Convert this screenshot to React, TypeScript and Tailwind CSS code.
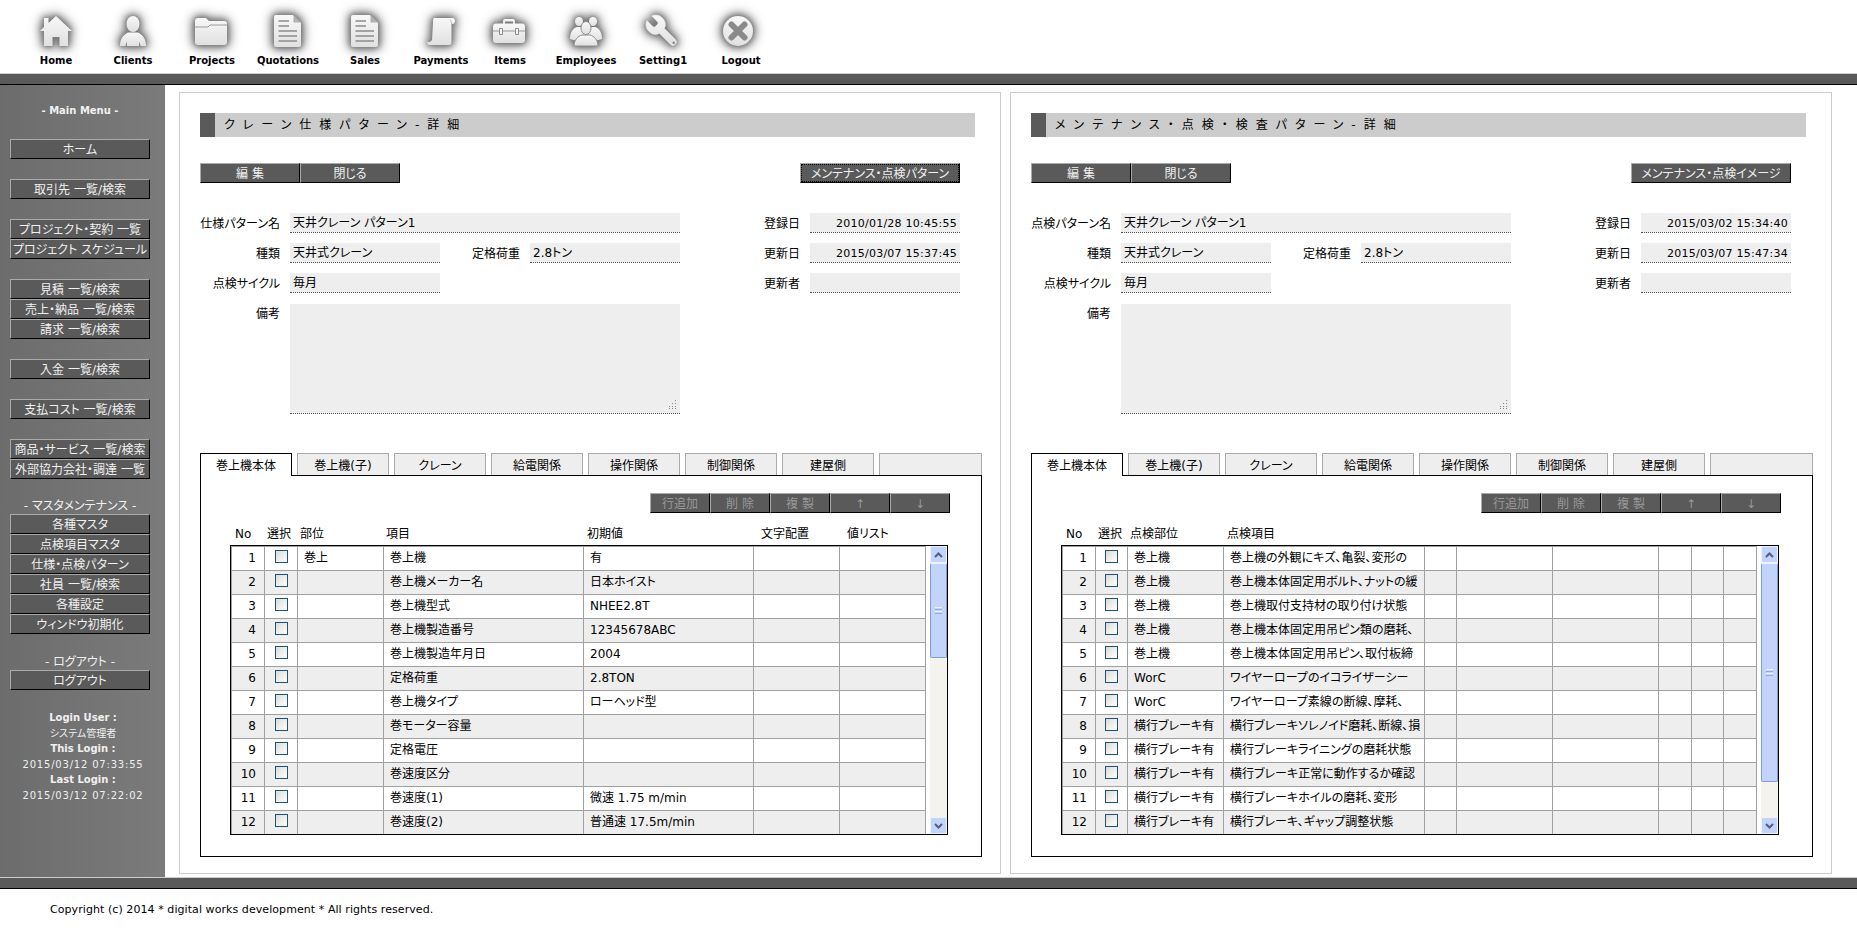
import React from 'react'

const navItems = [
  { label: 'Home', width: 'w-[76px]', icon: 'home', shift: '' },
  { label: 'Clients', width: 'w-[78px]', icon: 'client', shift: '' },
  { label: 'Projects', width: 'w-[80px]', icon: 'folder', shift: 'mr-[3px]' },
  { label: 'Quotations', width: 'w-[72px]', icon: 'doc', shift: 'mr-[2px]' },
  { label: 'Sales', width: 'w-[82px]', icon: 'doc', shift: 'mr-[1px]' },
  { label: 'Payments', width: 'w-[70px]', icon: 'scroll', shift: 'mr-[1px]' },
  { label: 'Items', width: 'w-[68px]', icon: 'toolbox', shift: 'mr-[3px]' },
  { label: 'Employees', width: 'w-[84px]', icon: 'people', shift: '' },
  { label: 'Setting1', width: 'w-[70px]', icon: 'wrench', shift: 'mr-[3px]' },
  { label: 'Logout', width: 'w-[86px]', icon: 'logout', shift: 'mr-[7px]' },
]

function NavIcon({ name, id }: { name: string; id: string }) {
  const fill = `url(#${id})`
  const defs = (
    <defs>
      <linearGradient id={id} x1="0" y1="0" x2="0" y2="1">
        <stop offset="0" stopColor="#f8f8f8" />
        <stop offset="1" stopColor="#e0e0e0" />
      </linearGradient>
    </defs>
  )
  const glow = '[filter:drop-shadow(0_0_2px_#777)_drop-shadow(0_0_4px_#777)_drop-shadow(0_0_5px_#999)]'
  if (name === 'home') {
    return (
      <svg width="32" height="30" viewBox="0 0 32 30" className={glow}>
        {defs}
        <path d="M16 0 32 15H28V30H19.5V21H12.5V30H4V15H0L4 11V2H8.5V7Z" fill={fill} />
      </svg>
    )
  }
  if (name === 'client') {
    return (
      <svg width="26" height="30" viewBox="0 0 26 30" className={glow}>
        {defs}
        <ellipse cx="13" cy="8" rx="6.5" ry="8" fill={fill} />
        <path d="M0 30C0 23 3 19 8 16.5L18 16.5C23 19 26 23 26 30H20.5L19.5 25.5 19 30H7L6.5 25.5 5.5 30Z" fill={fill} />
      </svg>
    )
  }
  if (name === 'folder') {
    return (
      <svg width="32" height="27" viewBox="0 0 32 27" className={glow}>
        {defs}
        <path d="M0 3Q0 0 3 0H11L14 3H29Q32 3 32 6V24Q32 27 29 27H3Q0 27 0 24Z" fill={fill} />
        <path d="M0 9H13L15 7H32" stroke="#9a9a9a" strokeWidth="1" fill="none" />
      </svg>
    )
  }
  if (name === 'doc') {
    return (
      <svg width="27" height="32" viewBox="0 0 27 32" className={glow}>
        {defs}
        <path d="M0 2Q0 0 2 0H19L27 8V30Q27 32 25 32H2Q0 32 0 30Z" fill={fill} />
        <path d="M19.5 0V7.5H27Z" fill="#b0b0b0" />
        <path d="M4.5 6H15M4.5 11H15M4.5 16H23M4.5 21H23M4.5 26H23" stroke="#8c8c8c" strokeWidth="1.7" />
      </svg>
    )
  }
  if (name === 'scroll') {
    return (
      <svg width="28" height="27" viewBox="0 0 28 27" className={glow}>
        {defs}
        <path d="M7 0H26Q28 0 28 2.5Q28 6 25 6H24.5V24Q24.5 27 22 27H3Q0 27 0 24Q3 25 5 22L6 5Q6 0 7 0Z" fill={fill} />
        <path d="M23 1.5Q24.5 3 24.5 6" stroke="#aaaaaa" strokeWidth="0.8" fill="none" />
      </svg>
    )
  }
  if (name === 'toolbox') {
    return (
      <svg width="32" height="24" viewBox="0 0 32 24" className={glow}>
        {defs}
        <path d="M10 6V2Q10 0 12 0H20Q22 0 22 2V6H20V2.5H12V6Z" fill={fill} />
        <rect x="0" y="4.5" width="32" height="19.5" rx="3" fill={fill} />
        <path d="M0 12H32" stroke="#999999" strokeWidth="1" />
        <path d="M6.5 9.5H9.5V15.5H6.5ZM22.5 9.5H25.5V15.5H22.5Z" fill="#f4f4f4" stroke="#8c8c8c" strokeWidth="1" />
      </svg>
    )
  }
  if (name === 'people') {
    return (
      <svg width="32" height="29" viewBox="0 0 32 29" className={glow}>
        {defs}
        <ellipse cx="9" cy="4.5" rx="4" ry="4.5" fill={fill} />
        <ellipse cx="23" cy="4.5" rx="4" ry="4.5" fill={fill} />
        <path d="M0 22C0 15 3 11 7 10H25C29 11 32 15 32 22L25 24H7Z" fill={fill} />
        <ellipse cx="16" cy="11" rx="5" ry="6.5" fill={fill} stroke="#8c8c8c" strokeWidth="1" />
        <path d="M4 29C4 23 8 19 12 18H20C24 19 28 23 28 29Z" fill={fill} stroke="#8c8c8c" strokeWidth="1" />
      </svg>
    )
  }
  if (name === 'wrench') {
    return (
      <svg width="38" height="38" viewBox="0 0 24 24" className={glow}>
        {defs}
        <g transform="translate(24 0) scale(-1 1)">
          <path
            d="M14.7 6.3a1 1 0 0 0 0 1.4l1.6 1.6a1 1 0 0 0 1.4 0l3.77-3.77a6 6 0 0 1-7.94 7.94l-6.91 6.91a2.12 2.12 0 0 1-3-3l6.91-6.91a6 6 0 0 1 7.94-7.94l-3.76 3.76z"
            fill={fill}
            stroke="#eeeeee"
            strokeWidth="0.5"
          />
          <circle cx="4.6" cy="19.4" r="0.8" fill="#888" />
        </g>
      </svg>
    )
  }
  return (
    <svg width="30" height="30" viewBox="0 0 30 30" className={glow}>
      {defs}
      <circle cx="15" cy="15" r="15" fill={fill} />
      <path d="M8.5 8.5 21.5 21.5M21.5 8.5 8.5 21.5" stroke="#8a8a8a" strokeWidth="6" strokeLinecap="round" />
    </svg>
  )
}

function Bar() {
  return <div className="h-[12px] shrink-0 border-t border-b border-t-[#cccccc] border-b-black bg-[#5a5a5a]" />
}

function Btn({ text, width, disabled, focused }: { text: string; width: string; disabled?: boolean; focused?: boolean }) {
  return (
    <button
      className={`${width} h-5 shrink-0 overflow-hidden whitespace-nowrap border border-t-[#aaaaaa] border-l-[#aaaaaa] border-r-black border-b-black bg-[#5a5a5a] pt-[2px] text-center text-[12px] leading-[16px] ${
        disabled ? 'text-[#999999]' : 'text-[#f0f0f0]'
      } ${focused ? 'outline-1 -outline-offset-2 outline-dotted outline-black' : ''}`}
    >
      {text}
    </button>
  )
}

function SideBtn({ text }: { text: string }) {
  return <Btn text={text} width="w-[140px]" />
}

function Sidebar() {
  return (
    <aside className="flex w-[165px] shrink-0 flex-col bg-linear-to-r from-[#6c6c6c] to-[#7b7b7b] pl-[10px] text-[#f0f0f0]">
      <div className="mt-[18px] h-4 w-[140px] text-center text-[10px] font-bold leading-4">- Main Menu -</div>
      <div className="mt-[20px] flex flex-col">
        <SideBtn text="ホーム" />
      </div>
      <div className="mt-[20px] flex flex-col">
        <SideBtn text="取引先 一覧/検索" />
      </div>
      <div className="mt-[20px] flex flex-col">
        <SideBtn text="プロジェクト・契約 一覧" />
        <SideBtn text="プロジェクト スケジュール" />
      </div>
      <div className="mt-[20px] flex flex-col">
        <SideBtn text="見積 一覧/検索" />
        <SideBtn text="売上・納品 一覧/検索" />
        <SideBtn text="請求 一覧/検索" />
      </div>
      <div className="mt-[20px] flex flex-col">
        <SideBtn text="入金 一覧/検索" />
      </div>
      <div className="mt-[20px] flex flex-col">
        <SideBtn text="支払コスト 一覧/検索" />
      </div>
      <div className="mt-[20px] flex flex-col">
        <SideBtn text="商品・サービス 一覧/検索" />
        <SideBtn text="外部協力会社・調達 一覧" />
      </div>
      <div className="mt-[20px] h-[15px] w-[140px] text-center text-[12px] leading-[15px]">- マスタメンテナンス -</div>
      <div className="flex flex-col">
        <SideBtn text="各種マスタ" />
        <SideBtn text="点検項目マスタ" />
        <SideBtn text="仕様・点検パターン" />
        <SideBtn text="社員 一覧/検索" />
        <SideBtn text="各種設定" />
        <SideBtn text="ウィンドウ初期化" />
      </div>
      <div className="mt-[21px] h-[15px] w-[140px] text-center text-[12px] leading-[15px]">- ログアウト -</div>
      <SideBtn text="ログアウト" />
      <div className="mt-[20px] w-[146px] text-center text-[10px] leading-[15.5px]">
        <div className="font-bold">Login User :</div>
        <div>システム管理者</div>
        <div className="font-bold">This Login :</div>
        <div className="tracking-[0.8px]">2015/03/12 07:33:55</div>
        <div className="font-bold">Last Login :</div>
        <div className="tracking-[0.8px]">2015/03/12 07:22:02</div>
      </div>
    </aside>
  )
}

function Field({ text, width, right }: { text?: string; width: string; right?: boolean }) {
  return (
    <div
      className={`${width} h-5 shrink-0 overflow-hidden whitespace-nowrap border-b border-dotted border-[#555555] bg-[#eeeeee] px-[3px] pt-px ${
        right ? 'text-right text-[11px] leading-[19px] tracking-[0.25px]' : 'text-[12px] leading-[19px]'
      }`}
    >
      {text}
    </div>
  )
}

function Label({ text, width }: { text: string; width: string }) {
  return <div className={`${width} mr-[10px] h-5 shrink-0 whitespace-nowrap pt-px text-right text-[12px] leading-5`}>{text}</div>
}

function ScrollBar({ thumb }: { thumb: string }) {
  return (
    <div className="ml-[4px] flex h-[288px] w-[17px] flex-col bg-[#f4f3ee]">
      <div className="flex h-[17px] items-center justify-center rounded-[2px] border border-[#eef2fc] bg-[#c3d4fa]">
        <svg width="9" height="6" viewBox="0 0 9 6">
          <path d="M1 5 4.5 1.5 8 5" fill="none" stroke="#4d6185" strokeWidth="2" />
        </svg>
      </div>
      <div className={`${thumb} flex shrink-0 flex-col items-center justify-center gap-[1px] rounded-[2px] border border-[#7f9ddb] border-t-[#eef2fc] bg-[#c3d4fa]`}>
        <div className="h-px w-[7px] bg-[#eef2fc]" />
        <div className="h-px w-[7px] bg-[#8faae6]" />
        <div className="h-px w-[7px] bg-[#eef2fc]" />
        <div className="h-px w-[7px] bg-[#8faae6]" />
      </div>
      <div className="flex-1" />
      <div className="flex h-[17px] items-center justify-center rounded-[2px] border border-[#eef2fc] bg-[#c3d4fa]">
        <svg width="9" height="6" viewBox="0 0 9 6">
          <path d="M1 1 4.5 4.5 8 1" fill="none" stroke="#4d6185" strokeWidth="2" />
        </svg>
      </div>
    </div>
  )
}

const tabs = ['巻上機本体', '巻上機(子)', 'クレーン', '給電関係', '操作関係', '制御関係', '建屋側']

interface PanelProps {
  title: string
  sideBtn: string
  sideFocused?: boolean
  nameLabel: string
  created: string
  updated: string
  heads: { text: string; cls: string }[]
  cols: string[]
  rows: string[][]
  thumb: string
}

function Panel(p: PanelProps) {
  return (
    <section className="h-[782px] w-[822px] shrink-0 border border-[#cccccc] bg-white pl-[20px] pt-[20px] text-black">
      <div className="flex h-6 w-[775px] bg-[#cccccc]">
        <div className="w-[15px] bg-[#5a5a5a]" />
        <div className="pl-[9px] pt-[1px] text-[12px] leading-[23px] tracking-[8px]">{p.title}</div>
      </div>

      <div className="mt-[26px] flex w-[760px] justify-between">
        <div className="flex">
          <Btn text="編 集" width="w-[100px]" />
          <Btn text="閉じる" width="w-[100px]" />
        </div>
        <Btn text={p.sideBtn} width="w-[160px]" focused={p.sideFocused} />
      </div>

      <div className="mt-[30px] flex h-[201px]">
        <div className="flex w-[480px] flex-col gap-[10px]">
          <div className="flex">
            <Label text={p.nameLabel} width="w-[80px]" />
            <Field text="天井クレーン パターン1" width="w-[390px]" />
          </div>
          <div className="flex">
            <Label text="種類" width="w-[80px]" />
            <Field text="天井式クレーン" width="w-[150px]" />
            <Label text="定格荷重" width="w-[80px]" />
            <Field text="2.8トン" width="w-[150px]" />
          </div>
          <div className="flex">
            <Label text="点検サイクル" width="w-[80px]" />
            <Field text="毎月" width="w-[150px]" />
          </div>
          <div className="flex">
            <Label text="備考" width="w-[80px]" />
            <div className="relative mt-px h-[110px] w-[390px] border-b border-dotted border-[#555555] bg-[#eeeeee]">
              <svg width="11" height="11" viewBox="0 0 11 11" className="absolute bottom-[3px] right-[3px]">
                <path d="M9 1h1v1H9zM6 4h1v1H6zM9 4h1v1H9zM3 7h1v1H3zM6 7h1v1H6zM9 7h1v1H9zM3 9h1v1H3zM6 9h1v1H6zM9 9h1v1H9z" fill="#888888" />
              </svg>
            </div>
          </div>
        </div>
        <div className="flex flex-col gap-[10px]">
          <div className="flex">
            <Label text="登録日" width="w-[120px]" />
            <Field text={p.created} width="w-[150px]" right />
          </div>
          <div className="flex">
            <Label text="更新日" width="w-[120px]" />
            <Field text={p.updated} width="w-[150px]" right />
          </div>
          <div className="flex">
            <Label text="更新者" width="w-[120px]" />
            <Field width="w-[150px]" />
          </div>
        </div>
      </div>

      <div className="relative z-10 mt-[39px] flex h-[22px] w-[782px] gap-[5px] text-[12px]">
        {tabs.map((t, i) => (
          <div
            key={t}
            className={
              i === 0
                ? 'h-[23px] w-[92px] border border-b-0 border-black bg-white pt-[2px] text-center leading-[20px]'
                : 'h-[22px] w-[92px] border border-b-0 border-[#aaaaaa] bg-[#eeeeee] pt-[2px] text-center leading-[20px]'
            }
          >
            {t}
          </div>
        ))}
        <div className="h-[22px] flex-1 border border-b-0 border-[#aaaaaa] bg-[#eeeeee]" />
      </div>

      <div className="h-[382px] w-[782px] border border-black pl-[29px] pt-[17px]">
        <div className="flex w-[720px] justify-end">
          {['行追加', '削 除', '複 製', '↑', '↓'].map(t => (
            <Btn key={t} text={t} width="w-[60px]" disabled />
          ))}
        </div>
        <div className="mt-[11px] flex h-[21px] text-[12px] leading-5">
          {p.heads.map(h => (
            <div key={h.text} className={`${h.cls} shrink-0 whitespace-nowrap`}>
              {h.text}
            </div>
          ))}
        </div>
        <div className="flex h-[290px] w-[718px] border border-black">
          <div className="w-[695px] shrink-0 border-l border-t border-[#a0a0a0]">
            {p.rows.map((row, r) => (
              <div
                key={r}
                className={`flex ${r === 11 ? 'h-[23px]' : 'h-6 border-b border-[#a0a0a0]'} ${r % 2 === 1 ? 'bg-[#eeeeee]' : 'bg-white'}`}
              >
                {p.cols.map((w, c) => (
                  <div
                    key={c}
                    className={`${w} shrink-0 overflow-hidden whitespace-nowrap border-r border-[#a0a0a0] text-[12px] leading-[23px]`}
                  >
                    {c === 0 ? (
                      <div className="pr-[8px] text-right">{r + 1}</div>
                    ) : c === 1 ? (
                      <div className="flex justify-center pt-[3px]">
                        <div className="h-[13px] w-[13px] border border-[#1c5180] bg-linear-to-br from-[#dcdcd5] to-white" />
                      </div>
                    ) : (
                      <div className="overflow-hidden pl-[6px] pr-[6px]">{row[c - 2]}</div>
                    )}
                  </div>
                ))}
              </div>
            ))}
          </div>
          <ScrollBar thumb={p.thumb} />
        </div>
      </div>
    </section>
  )
}

const leftRows: string[][] = [
  ['巻上', '巻上機', '有'],
  ['', '巻上機メーカー名', '日本ホイスト'],
  ['', '巻上機型式', 'NHEE2.8T'],
  ['', '巻上機製造番号', '12345678ABC'],
  ['', '巻上機製造年月日', '2004'],
  ['', '定格荷重', '2.8TON'],
  ['', '巻上機タイプ', 'ローヘッド型'],
  ['', '巻モーター容量', ''],
  ['', '定格電圧', ''],
  ['', '巻速度区分', ''],
  ['', '巻速度(1)', '微速 1.75 m/min'],
  ['', '巻速度(2)', '普通速 17.5m/min'],
]

const brake = '横行ブレーキ有'
const rightRows: string[][] = [
  ['巻上機', '巻上機の外観にキズ、亀裂、変形の'],
  ['巻上機', '巻上機本体固定用ボルト、ナットの緩'],
  ['巻上機', '巻上機取付支持材の取り付け状態'],
  ['巻上機', '巻上機本体固定用吊ピン類の磨耗、'],
  ['巻上機', '巻上機本体固定用吊ピン、取付板締'],
  ['WorC', 'ワイヤーロープのイコライザーシー'],
  ['WorC', 'ワイヤーロープ素線の断線、摩耗、'],
  [brake, '横行ブレーキソレノイド磨耗、断線、損'],
  [brake, '横行ブレーキライニングの磨耗状態'],
  [brake, '横行ブレーキ正常に動作するか確認'],
  [brake, '横行ブレーキホイルの磨耗、変形'],
  [brake, '横行ブレーキ、ギャップ調整状態'],
]

export default function App() {
  return (
    <div className="flex h-[938px] w-[1857px] flex-col overflow-hidden bg-white [font-family:'DejaVu_Sans','Noto_Sans_CJK_JP',sans-serif] [font-feature-settings:'palt']">
      <header className="flex h-[73px] shrink-0 pl-[18px] pt-[13px]">
        {navItems.map((n, i) => (
          <div key={n.label} className={`${n.width} flex shrink-0 flex-col items-center`}>
            <div className={`${n.shift} flex h-[36px] items-center justify-center`}>
              <NavIcon name={n.icon} id={`nav-grad-${i}`} />
            </div>
            <div className="mt-[6px] text-[10px] font-bold leading-3 text-black">{n.label}</div>
          </div>
        ))}
      </header>
      <Bar />
      <div className="flex h-[792px] shrink-0">
        <Sidebar />
        <div className="ml-[14px] flex gap-[9px] pt-[7px]">
          <Panel
            title="クレーン仕様パターン-詳細"
            sideBtn="メンテナンス・点検パターン"
            sideFocused
            nameLabel="仕様パターン名"
            created="2010/01/28 10:45:55"
            updated="2015/03/07 15:37:45"
            heads={[
              { text: 'No', cls: 'w-[35px] pl-[5px]' },
              { text: '選択', cls: 'w-[33px] pl-[2px]' },
              { text: '部位', cls: 'w-[86px] pl-[2px]' },
              { text: '項目', cls: 'w-[200px] pl-[2px]' },
              { text: '初期値', cls: 'w-[170px] pl-[3px]' },
              { text: '文字配置', cls: 'w-[86px] pl-[7px]' },
              { text: '値リスト', cls: 'w-[86px] pl-[7px]' },
            ]}
            cols={['w-[33px]', 'w-[33px]', 'w-[86px]', 'w-[200px]', 'w-[170px]', 'w-[86px]', 'w-[86px]']}
            rows={leftRows}
            thumb="h-[95px]"
          />
          <Panel
            title="メンテナンス・点検・検査パターン-詳細"
            sideBtn="メンテナンス・点検イメージ"
            nameLabel="点検パターン名"
            created="2015/03/02 15:34:40"
            updated="2015/03/07 15:47:34"
            heads={[
              { text: 'No', cls: 'w-[35px] pl-[5px]' },
              { text: '選択', cls: 'w-[32px] pl-[2px]' },
              { text: '点検部位', cls: 'w-[96px] pl-[2px]' },
              { text: '点検項目', cls: 'w-[201px] pl-[3px]' },
            ]}
            cols={['w-[33px]', 'w-[32px]', 'w-[96px]', 'w-[201px]', 'w-[32px]', 'w-[96px]', 'w-[106px]', 'w-[33px]', 'w-[32px]', 'w-[33px]']}
            rows={rightRows}
            thumb="h-[219px]"
          />
        </div>
      </div>
      <Bar />
      <footer className="pl-[50px] pt-[13px] text-[11px] leading-4 tracking-[0.07px] text-black">
        Copyright (c) 2014 * digital works development * All rights reserved.
      </footer>
    </div>
  )
}
